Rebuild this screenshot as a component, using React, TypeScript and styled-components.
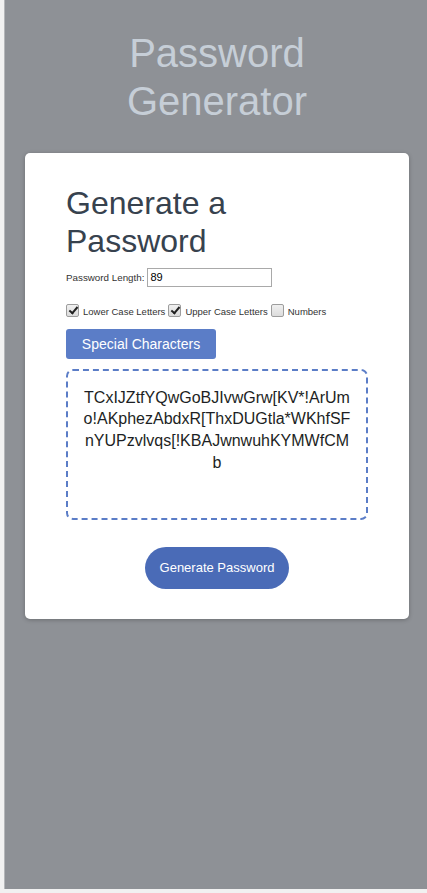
import React, { useState } from 'react';
import styled, { createGlobalStyle } from 'styled-components';

const GlobalStyle = createGlobalStyle`
  html, body {
    margin: 0;
    padding: 0;
    background: #f1f1f1;
    font-family: "Liberation Sans", Arial, sans-serif;
  }
`;

type Option = {
  id: string;
  label: string;
  checked: boolean;
};

const initialOptions: Option[] = [
  { id: 'lower', label: 'Lower Case Letters', checked: true },
  { id: 'upper', label: 'Upper Case Letters', checked: true },
  { id: 'numbers', label: 'Numbers', checked: false },
];

const password =
  'TCxIJZtfYQwGoBJIvwGrw[KV*!ArUmo!AKphezAbdxR[ThxDUGtla*WKhfSFnYUPzvlvqs[!KBAJwnwuhKYMWfCMb';

export default function App() {
  const [length, setLength] = useState('89');
  const [options, setOptions] = useState(initialOptions);

  const toggle = (id: string) => {
    setOptions(prev => prev.map(o => (o.id === id ? { ...o, checked: !o.checked } : o)));
  };

  return (
    <>
      <GlobalStyle />
      <Page>
        <Panel>
          <Title>Password Generator</Title>
          <Card>
            <Heading>Generate a Password</Heading>
            <LengthRow>
              <SmallLabel htmlFor="length">Password Length:</SmallLabel>
              <LengthInput
                id="length"
                type="text"
                value={length}
                onChange={event => setLength(event.target.value)}
              />
            </LengthRow>
            <OptionRow>
              {options.map(o => (
                <OptionItem key={o.id}>
                  <Check
                    type="checkbox"
                    id={o.id}
                    checked={o.checked}
                    onChange={() => toggle(o.id)}
                  />
                  <OptionLabel htmlFor={o.id}>{o.label}</OptionLabel>
                </OptionItem>
              ))}
            </OptionRow>
            <SpecialButton>Special Characters</SpecialButton>
            <Output>
              <OutputText>{password}</OutputText>
            </Output>
            <ButtonRow>
              <GenerateButton>Generate Password</GenerateButton>
            </ButtonRow>
          </Card>
        </Panel>
      </Page>
    </>
  );
}

const Page = styled.div`
  padding: 0 0 4px 4px;
`;

const Panel = styled.main`
  background: #8e9196;
  border-left: 1px solid #b4b6b9;
  height: 889px;
  box-sizing: border-box;
  padding: 29px 18px 0 20px;
`;

const Title = styled.h1`
  margin: 0 auto 28px;
  width: 220px;
  text-align: center;
  font-size: 40px;
  line-height: 48px;
  font-weight: 400;
  color: #c6ced7;
`;

const Card = styled.section`
  background: #fff;
  border-radius: 5px;
  box-shadow: 0 1px 4px rgba(0, 0, 0, 0.25);
  padding: 31px 41px 30px;
  display: flex;
  flex-direction: column;
  align-items: flex-start;
`;

const Heading = styled.h2`
  margin: 0;
  font-size: 32px;
  line-height: 38.4px;
  font-weight: 400;
  color: #37424e;
`;

const LengthRow = styled.div`
  display: flex;
  align-items: center;
  gap: 3px;
  margin-top: 7px;
`;

const SmallLabel = styled.label`
  font-size: 9.8px;
  color: #333;
`;

const OptionLabel = styled(SmallLabel)`
  font-size: 9.5px;
`;

const LengthInput = styled.input`
  box-sizing: border-box;
  width: 125px;
  height: 19px;
  border: 1px solid #a9a9a9;
  padding: 1px 2px;
  font-family: "Liberation Sans", Arial, sans-serif;
  font-size: 11px;
  color: #000;
  outline: none;
`;

const OptionRow = styled.div`
  display: flex;
  align-items: flex-end;
  margin-top: 17px;
`;

const OptionItem = styled.div`
  display: flex;
  align-items: flex-end;
  margin-right: 3px;
  line-height: 11px;
`;

const Check = styled.input`
  appearance: none;
  -webkit-appearance: none;
  box-sizing: border-box;
  width: 13px;
  height: 13px;
  margin: 0 4px 0 0;
  border: 1px solid #9d9d9d;
  border-radius: 2px;
  background: linear-gradient(#f0f0f0, #dcdcdc);
  position: relative;

  &:checked::after {
    content: '';
    position: absolute;
    left: 3.5px;
    top: 0.5px;
    width: 3px;
    height: 7px;
    border: solid #222;
    border-width: 0 2px 2px 0;
    transform: rotate(40deg);
  }
`;

const SpecialButton = styled.button`
  margin-top: 12px;
  width: 150px;
  height: 30px;
  border: none;
  border-radius: 3px;
  background: #5b7dc7;
  color: #fff;
  font-family: "Liberation Sans", Arial, sans-serif;
  font-size: 14px;
  cursor: pointer;
`;

const Output = styled.div`
  margin-top: 10px;
  box-sizing: border-box;
  width: 302px;
  height: 151px;
  border: 2px dashed #5b7dc7;
  border-radius: 7px;
  padding: 16px 0 0;
  display: flex;
  justify-content: center;
`;

const OutputText = styled.p`
  margin: 0;
  width: 270px;
  text-align: center;
  word-break: break-all;
  font-size: 16px;
  line-height: 21.6px;
  color: #1d1f24;
`;

const ButtonRow = styled.div`
  align-self: stretch;
  display: flex;
  justify-content: center;
  margin-top: 27px;
`;

const GenerateButton = styled.button`
  width: 144px;
  height: 42px;
  border: none;
  border-radius: 21px;
  background: #4a6bb7;
  color: #fff;
  font-family: "Liberation Sans", Arial, sans-serif;
  font-size: 13px;
  cursor: pointer;
`;
